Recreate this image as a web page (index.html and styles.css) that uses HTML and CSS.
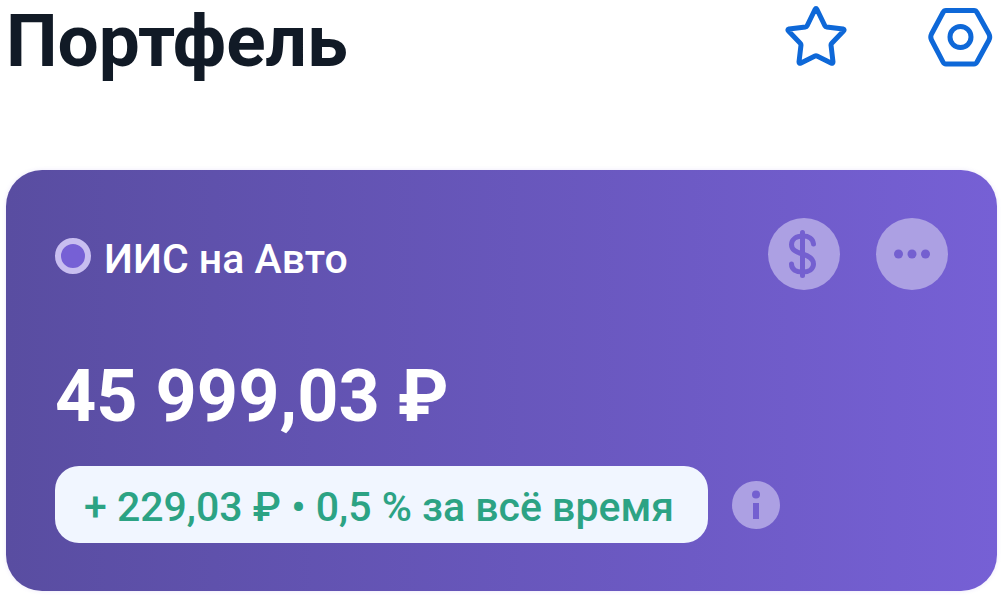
FILE: index.html
```html
<!DOCTYPE html>
<html lang="ru">
<head>
<meta charset="utf-8">
<meta name="viewport" content="width=device-width, initial-scale=1">
<title>Портфель</title>
<link rel="stylesheet" href="styles.css">
</head>
<body>
<header class="header">
  <h1 class="title">Портфель</h1>
  <div class="header-actions">
    <button class="icon-button" type="button" aria-label="Избранное">
      <svg class="header-icon" viewBox="0 0 72 72" aria-hidden="true"><path d="M35 9.500Q36 7.500 37 9.500L45 26Q45.500 27 46.500 27L63 29Q65 29.500 63.500 31L52 43Q51 44 51 45L53 62Q53 64 51 63L37 56Q36 55.500 35 56L21 63Q19 64 19 62L21 45Q21 44 20 43L8.500 31Q7 29.500 9 29L25.500 27Q26.500 27 27 26Z"/></svg>
    </button>
    <button class="icon-button" type="button" aria-label="Настройки">
      <svg class="header-icon" viewBox="0 0 72 72" aria-hidden="true"><path d="M22 10.500H50Q52 10.500 53 12.500L65 34Q66.500 37 65 40L53 62Q52 64 50 64H22Q20 64 19 62L7.500 40Q6 37 7.500 34L19 12.500Q20 10.500 22 10.500Z"/><circle cx="36.500" cy="37" r="10.500"/></svg>
    </button>
  </div>
</header>
<main class="content">
  <section class="card">
    <div class="card-top">
      <h2 class="account"><span class="account-mark"></span>ИИС на Авто</h2>
      <div class="card-actions">
        <button class="round-button" type="button" aria-label="Валюта">
          <svg class="round-icon" viewBox="0 0 72 72" aria-hidden="true"><g class="dollar"><path d="M34.500 14.500V57.500"/><path d="M45.500 26C45 20.500 40.500 18 35 18C28 18 23.500 21.500 23.500 26.500C23.500 32 28 34 34.500 36C41.500 38 45.500 40.500 45.500 46C45.500 51 41 54 34.500 54C28 54 23.500 51.500 23.500 46"/></g></svg>
        </button>
        <button class="round-button" type="button" aria-label="Ещё">
          <svg class="round-icon" viewBox="0 0 72 72" aria-hidden="true"><g class="solid"><circle cx="22.500" cy="36" r="4.500"/><circle cx="36" cy="36" r="4.500"/><circle cx="49.500" cy="36" r="4.500"/></g></svg>
        </button>
      </div>
    </div>
    <p class="amount">45 999,03 ₽</p>
    <div class="result">
      <p class="pill">+ 229,03 ₽ • 0,5 % за всё время</p>
      <button class="round-button info-button" type="button" aria-label="Информация">
        <svg class="round-icon" viewBox="0 0 48 48" aria-hidden="true"><g class="solid"><circle cx="24" cy="13.500" r="4"/><path d="M21 22H27V38H21Z"/></g></svg>
      </button>
    </div>
  </section>
</main>
</body>
</html>
```
FILE: styles.css
```css
* {
  box-sizing: border-box;
}

body {
  margin: 0;
  background: #fff;
  color: #111a26;
  font-family: Roboto, "Noto Sans", sans-serif;
}

h1, h2, p {
  margin: 0;
}

button {
  display: block;
  padding: 0;
  border: 0;
  background: none;
}

svg {
  display: block;
  width: 100%;
  height: 100%;
}

.header {
  display: flex;
  justify-content: space-between;
  align-items: flex-start;
  padding: 0 8px 0 6px;
}

.title {
  font-size: 73px;
  font-weight: 700;
  line-height: 82px;
}

.header-actions {
  display: flex;
  gap: 72px;
}

.icon-button {
  width: 72px;
  height: 72px;
}

.header-icon {
  fill: none;
  stroke: #0e68d8;
  stroke-width: 5px;
  stroke-linejoin: round;
}

.content {
  padding: 88px 7px 18px 6px;
}

.card {
  padding: 48px 49px;
  border-radius: 36px;
  background: linear-gradient(90deg, #594da1, #7660d5);
  box-shadow: 0 0 4px rgba(118, 96, 213, 0.15);
  color: #fff;
}

.card-top {
  display: flex;
  justify-content: space-between;
  align-items: flex-start;
}

.account {
  display: flex;
  align-items: center;
  gap: 13px;
  padding-top: 16px;
  font-size: 41px;
  font-weight: 500;
  line-height: 50px;
}

.account-mark {
  width: 36px;
  height: 36px;
  margin-bottom: 6px;
  border: 6px solid #c8bef0;
  border-radius: 50%;
  background: #7660d5;
}

.card-actions {
  display: flex;
  gap: 36px;
}

.round-button {
  width: 72px;
  height: 72px;
  border-radius: 50%;
  background: #aca0e3;
}

.round-icon {
  color: #7460d0;
}

.dollar {
  fill: none;
  stroke: currentColor;
  stroke-width: 5px;
  stroke-linecap: round;
}

.solid {
  fill: currentColor;
}

.amount {
  margin-top: 65px;
  font-size: 72px;
  font-weight: 700;
  line-height: 84px;
}

.result {
  display: flex;
  align-items: center;
  gap: 24px;
  margin-top: 27px;
}

.pill {
  padding: 16px 34px 11px 29px;
  border-radius: 24px;
  background: #f1f6ff;
  color: #2ca384;
  font-size: 41px;
  font-weight: 500;
  line-height: 50px;
}

.info-button {
  width: 48px;
  height: 48px;
}
```
